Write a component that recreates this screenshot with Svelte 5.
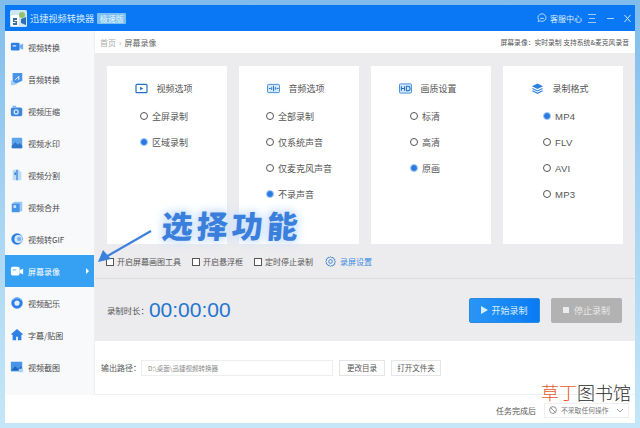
<script>
  const nav = [
    { label: '视频转换', icon: 'video' },
    { label: '音频转换', icon: 'audio' },
    { label: '视频压缩', icon: 'compress' },
    { label: '视频水印', icon: 'mark' },
    { label: '视频分割', icon: 'split' },
    { label: '视频合并', icon: 'merge' },
    { label: '视频转GIF', icon: 'gif' },
    { label: '屏幕录像', icon: 'record', active: true },
    { label: '视频配乐', icon: 'music' },
    { label: '字幕/贴图', icon: 'star' },
    { label: '视频截图', icon: 'shot' }
  ];
  const cards = [
    { cls: 'c1', title: '视频选项', icon: 'play', opts: ['全屏录制', '区域录制'], sel: 1 },
    { cls: 'c2', title: '音频选项', icon: 'wave', opts: ['全部录制', '仅系统声音', '仅麦克风声音', '不录声音'], sel: 3 },
    { cls: 'c3', title: '画质设置', icon: 'hd', opts: ['标清', '高清', '原画'], sel: 2 },
    { cls: 'c4', title: '录制格式', icon: 'layers', opts: ['MP4', 'FLV', 'AVI', 'MP3'], sel: 0 }
  ];
  const checks = ['开启屏幕画图工具', '开启悬浮框', '定时停止录制'];
</script>

<div class="page">
  <div class="window">
    <header class="titlebar">
      <svg class="logo" viewBox="0 0 17 17" width="17" height="17">
        <rect width="17" height="17" rx="1.500" fill="#cfe6f4" />
        <path d="M1 5h8v11H1z" fill="#fff" />
        <circle cx="12" cy="5" r="3" fill="#8fc36b" />
        <path d="M11 9l5-2v8l-5-2z" fill="#2f6fb4" />
        <path d="M3 8h4v2H4.500v1H7v4H3v-2h2.500v-1H3z" fill="#3c6f9c" />
      </svg>
      <span class="app-name">迅捷视频转换器</span>
      <span class="badge">极速版</span>
      <div class="spacer"></div>
      <svg class="chat" viewBox="0 0 12 12" width="10" height="10" fill="none" stroke="#bfe0ff" stroke-width="1.100">
        <path d="M6 1a4.800 4.500 0 1 1-2.600 8.300L1.500 10.500l.5-2.400A4.800 4.500 0 0 1 6 1z" />
        <path d="M3.800 6.500h4.400" />
      </svg>
      <span class="service">客服中心</span>
      <svg class="win-ico menu" viewBox="0 0 8 9" width="8" height="9" stroke="#a8d4ff" stroke-width=".9">
        <path d="M0 .5h8M1 4.500h6M0 8.500h8" />
      </svg>
      <svg class="win-ico min" viewBox="0 0 9 9" width="9" height="9" stroke="#a8d4ff" stroke-width="1">
        <path d="M1 4.500h7" />
      </svg>
      <svg class="win-ico" viewBox="0 0 9 9" width="9" height="9" stroke="#cfe7ff" stroke-width="1">
        <path d="M1.500 1l6 7M7.500 1l-6 7" />
      </svg>
    </header>

    <div class="body">
      <aside class="sidebar">
        {#each nav as item}
          <div class="nav-item" class:active={item.active}>
            <svg class="nav-ico" viewBox="0 0 16 16" width="14" height="14">
              {#if item.icon === 'video'}
                <rect x="1" y="3" width="10" height="9" rx="1.500" fill="#2f80e6" />
                <path d="M11 6l4-2v7l-4-2z" fill="#6fb0f2" />
                <rect x="3" y="6" width="4" height="1.500" fill="#cfe6ff" />
              {:else if item.icon === 'audio'}
                <path d="M3 1h11v9L3 15z" fill="#4a94e8" />
                <path d="M1 9l7 5-5 1H1z" fill="#a7cff5" />
                <path d="M6 9l4-4v4" stroke="#fff" fill="none" />
              {:else if item.icon === 'compress'}
                <rect x="1" y="4" width="13" height="10" rx="2" fill="#3d87dc" />
                <circle cx="7" cy="9" r="3" fill="#d6e9fb" />
                <circle cx="7" cy="9" r="1.500" fill="#3d87dc" />
                <rect x="3" y="2" width="4" height="2" fill="#7bb4ee" />
              {:else if item.icon === 'mark'}
                <rect x="2" y="2" width="12" height="12" rx="1.500" fill="#5ea4ea" />
                <path d="M2 11l4-4 3 3 2-2 3 3v3H2z" fill="#2f74c9" />
              {:else if item.icon === 'split'}
                <path d="M3 2h7l3 3v9H3z" fill="#bcdcf8" />
                <path d="M8 2v12" stroke="#3a86dd" stroke-width="1.500" />
                <rect x="5" y="5" width="2" height="3" fill="#3a86dd" />
              {:else if item.icon === 'merge'}
                <rect x="4" y="2" width="10" height="11" fill="#9cc9f4" />
                <rect x="2" y="4" width="9" height="10" fill="#4a94e8" />
                <rect x="4" y="6" width="3" height="3" fill="#cfe6ff" />
              {:else if item.icon === 'gif'}
                <circle cx="8" cy="8" r="6.500" fill="#2f80e6" />
                <circle cx="9.500" cy="8" r="4.500" fill="#d5e9fb" />
                <circle cx="10.500" cy="8" r="2.500" fill="#7bb4ee" />
              {:else if item.icon === 'record'}
                <rect x="1" y="3" width="10" height="10" rx="2" fill="#fff" />
                <path d="M11 7l4-2v7l-4-2z" fill="#fff" />
                <rect x="3" y="6" width="4" height="1.500" fill="#8cc6f6" />
              {:else if item.icon === 'music'}
                <circle cx="8" cy="8" r="6.500" fill="#2f80e6" />
                <circle cx="8" cy="8" r="3" fill="#e1effb" />
                <path d="M3 5a6 6 0 0 1 10 0" stroke="#8fc3f3" fill="none" />
              {:else if item.icon === 'star'}
                <path d="M8 1l7 6-2 1v6H9v-4H7v4H3V8L1 7z" fill="#2f80e6" />
              {:else}
                <rect x="1" y="2" width="13" height="11" fill="#4a94e8" />
                <path d="M2 11l4-4 3 3 4-3v5H2z" fill="#1f66c0" />
                <rect x="10" y="10" width="5" height="4" fill="#a9d2f6" />
              {/if}
            </svg>
            <span class="nav-label">{item.label}</span>
            {#if item.active}<span class="caret"></span>{/if}
          </div>
        {/each}
      </aside>

      <main class="main">
        <div class="crumbs">
          <span class="home">首页</span>
          <span class="sep">›</span>
          <span>屏幕录像</span>
          <div class="spacer"></div>
          <span class="hint">屏幕录像：实时录制 支持系统&amp;麦克风录音</span>
        </div>

        <section class="options">
          <div class="cards">
            {#each cards as card}
              <div class="card {card.cls}">
                <div class="card-title">
                  <svg viewBox="0 0 14 12" width="13" height="11">
                    {#if card.icon === 'play'}
                      <rect x="1" y="1.500" width="12" height="9" rx="1" fill="none" stroke="#1f70c4" stroke-width="1.300" />
                      <path d="M5.500 4l3.500 2-3.500 2z" fill="#1f70c4" />
                    {:else if card.icon === 'wave'}
                      <rect x="0.500" y="1.500" width="13" height="9" rx="1" fill="#d5e8fa" stroke="#3a8ad8" />
                      <path d="M2 6h2M5 4.500v3M7 3v6M9 4.500v3M10.500 6h2" stroke="#1f70c4" />
                    {:else if card.icon === 'hd'}
                      <rect x="0.500" y="1" width="13" height="10" rx="1" fill="#d5e8fa" stroke="#3a8ad8" />
                      <path d="M2.500 3.500v5M6 3.500v5M2.500 6H6" stroke="#1f70c4" stroke-width="1.100" fill="none" />
                      <path d="M8 3.500v5h1.500a2.500 2.500 0 0 0 0-5z" stroke="#1f70c4" stroke-width="1.100" fill="none" />
                    {:else}
                      <path d="M7 0.500l6 3-6 3-6-3z" fill="#2f80dc" />
                      <path d="M1.500 6l5.500 2.700L12.500 6" stroke="#2f80dc" stroke-width="1.200" fill="none" />
                      <path d="M1.500 8.500l5.500 2.700 5.500-2.700" stroke="#2f80dc" stroke-width="1.200" fill="none" />
                    {/if}
                  </svg>
                  <span>{card.title}</span>
                </div>
                <div class="radios">
                  {#each card.opts as opt, i}
                    <div class="radio-row">
                      <span class="radio" class:on={i === card.sel}></span>
                      <span class="radio-text" class:latin={card.icon === 'layers'}>{opt}</span>
                    </div>
                  {/each}
                </div>
              </div>
            {/each}
          </div>

          <div class="checks">
            {#each checks as c}
              <label class="check"><span class="box"></span>{c}</label>
            {/each}
            <svg class="gear" viewBox="0 0 12 12" width="11" height="11" fill="none" stroke="#3a7fc8" stroke-width="1">
              <path d="M6 .8l1.200 1.100 1.600-.3.500 1.500 1.500.6-.3 1.500.9 1.100-1 1.200.3 1.500-1.500.5-.6 1.400-1.500-.3L6 11.200l-1.100-1-1.600.3-.5-1.500-1.400-.5.300-1.600L.8 6l.9-1.100-.3-1.600 1.400-.5.600-1.400 1.500.3z" />
              <circle cx="6" cy="6" r="2" />
            </svg>
            <span class="settings">录屏设置</span>
          </div>
        </section>

        <section class="timer">
          <span class="timer-label">录制时长：</span>
          <span class="time">00:00:00</span>
          <div class="spacer"></div>
          <button class="btn start"><span class="tri"></span>开始录制</button>
          <button class="btn stop"><span class="sq"></span>停止录制</button>
        </section>

        <section class="output">
          <span class="out-label">输出路径：</span>
          <div class="path">D:\桌面\迅捷视频转换器</div>
          <button class="ghost dir">更改目录</button>
          <button class="ghost folder">打开文件夹</button>
        </section>
      </main>
    </div>

    <footer class="footer">
      <span class="done">任务完成后</span>
      <div class="select">
        <svg viewBox="0 0 8 8" width="8" height="8" fill="none" stroke="#777" stroke-width=".8">
          <circle cx="4" cy="4" r="3.400" /><path d="M1.700 1.700l4.600 4.600" />
        </svg>
        <span>不采取任何操作</span>
        <svg class="chev" viewBox="0 0 8 5" width="8" height="5" fill="none" stroke="#888" stroke-width=".8"><path d="M1 1l3 3 3-3" /></svg>
      </div>
    </footer>
  </div>

  <div class="callout">选择功能</div>
  <svg class="arrow" viewBox="0 0 60 36" width="60" height="36">
    <path d="M53 2L6 29" stroke="#3d7fdc" stroke-width="2.200" />
    <path d="M0 33l5-12 8 9z" fill="#3d7fdc" />
  </svg>
  <div class="watermark"><span class="orange">草丁</span>图书馆</div>
</div>

<style>
  :global(body) {
    margin: 0;
    font-family: "Noto Sans CJK SC", "Liberation Sans", sans-serif;
  }
  .page {
    position: relative;
    width: 640px;
    height: 428px;
    box-sizing: border-box;
    padding: 5px;
    overflow: hidden;
    background: linear-gradient(180deg, #7fbcec 0%, #a9d4f2 50%, #c5e6f8 100%);
  }
  .window {
    display: flex;
    flex-direction: column;
    height: 418px;
    background: #fff;
  }
  .spacer { flex: 1; }
  .titlebar {
    display: flex;
    align-items: center;
    height: 26px;
    flex: none;
    background: #0a78f5;
    color: #fff;
    padding-left: 5px;
    padding-right: 3px;
  }
  .logo { margin-right: 3px; }
  .app-name { font-size: 9.200px; color: #d8ebff; }
  .badge {
    margin-left: 3px;
    font-size: 8px;
    line-height: 11px;
    padding: 0 2.500px;
    background: #7ac0f0;
    color: #e8f6ff;
    border-radius: 1px;
  }
  .chat { margin-right: 3px; }
  .service { font-size: 8px; color: #dcedff; margin-right: 6px; }
  .win-ico.min { margin-left: 10px; }
  .win-ico:last-child { margin-left: 8px; }
  .body { display: flex; height: 364px; flex: none; }
  .sidebar {
    width: 89px;
    flex: none;
    background: #f8f9fb;
    border-right: 1px solid #efeff1;
  }
  .nav-item {
    display: flex;
    align-items: center;
    height: 32px;
    padding-left: 5px;
    color: #4a4a4a;
    font-size: 8px;
  }
  .nav-ico { flex: none; margin-right: 4px; }
  .nav-item.active { background: #36a1f3; color: #fff; }
  .caret {
    margin-left: 26px;
    width: 0;
    height: 0;
    border-left: 3.500px solid #fff;
    border-top: 3px solid transparent;
    border-bottom: 3px solid transparent;
  }
  .main { flex: 1; min-width: 0; display: flex; flex-direction: column; }
  .crumbs {
    display: flex;
    align-items: center;
    gap: 3px;
    height: 22px;
    flex: none;
    padding: 0 6px 0 5px;
    font-size: 8px;
    color: #666;
    background: #fff;
  }
  .home { color: #aaa; }
  .sep { color: #aaa; }
  .hint { font-size: 6.800px; color: #555; }
  .options {
    height: 226px;
    flex: none;
    box-sizing: border-box;
    background: #ecebee;
    padding: 13px 11px 0 12px;
    border-bottom: 1px solid #dcdcdf;
  }
  .cards { display: grid; grid-template-columns: repeat(4, 120px); gap: 12px; }
  .card { background: #fff; height: 178px; }
  .card-title {
    display: flex;
    align-items: center;
    justify-content: center;
    gap: 8px;
    height: 14px;
    padding: 15px 6px 8px 0;
    font-size: 9px;
    color: #555;
  }
  .radios { display: flex; flex-direction: column; }
  .radio-row { display: flex; align-items: center; height: 26px; gap: 4px; font-size: 9px; color: #555; }
  .latin { font-family: "Liberation Sans", sans-serif; font-size: 9.500px; letter-spacing: .3px; }
  .c1 .radios { padding-left: 33px; }
  .c2 .radios { padding-left: 27px; }
  .c3 .radios { padding-left: 39px; }
  .c4 .radios { padding-left: 40px; }
  .radio {
    width: 8px;
    height: 8px;
    box-sizing: border-box;
    border: 1px solid #555;
    border-radius: 50%;
    background: #fff;
  }
  .radio.on { background: #2a7ae0; border: 1px solid #a8ccf5; }
  .checks {
    display: flex;
    align-items: center;
    height: 34px;
    margin-left: -1px;
    padding-top: 1px;
    box-sizing: border-box;
    font-size: 8px;
    color: #555;
  }
  .check { display: flex; align-items: center; gap: 3px; margin-right: 11px; }
  .box { width: 8px; height: 8px; box-sizing: border-box; border: 1px solid #555; background: #fff; }
  .gear { margin-left: 1px; margin-right: 4px; }
  .settings { color: #3d8be0; }
  .timer {
    height: 62px;
    flex: none;
    box-sizing: border-box;
    display: flex;
    align-items: center;
    padding: 0 13px 0 12px;
    background: #ecebee;
  }
  .timer-label { font-size: 8.400px; color: #555; }
  .time { font-family: "Liberation Sans", sans-serif; font-size: 21px; color: #2576cf; }
  .btn {
    display: flex;
    align-items: center;
    justify-content: center;
    gap: 3px;
    width: 71px;
    height: 25px;
    margin: 0 0 0 11px;
    padding: 0;
    border-radius: 2px;
    border: none;
    color: #fff;
    font: inherit;
    font-size: 9px;
  }
  .start { background: linear-gradient(90deg, #2996f5, #0a7af5); border: 1px solid #2a8ae0; box-sizing: border-box; color: #d9eeff; }
  .stop { background: #b2b2b2; color: #e8e8e8; }
  .tri { border-left: 7px solid #d8eeff; border-top: 4px solid transparent; border-bottom: 4px solid transparent; }
  .sq { width: 6px; height: 6px; background: #ececec; margin-right: 2px; }
  .output {
    flex: 1;
    display: flex;
    align-items: center;
    padding: 0 0 0 6px;
    background: #fff;
    border-bottom: 1px solid #f0f0f0;
    font-size: 8px;
    color: #555;
  }
  .out-label { width: 40px; flex: none; white-space: nowrap; }
  .path {
    width: 192px;
    height: 16px;
    box-sizing: border-box;
    line-height: 14px;
    border: 1px solid #eee;
    padding-left: 6px;
    font-size: 6.500px;
    color: #888;
    margin-right: 6px;
  }
  .ghost {
    height: 16px;
    padding: 0;
    margin-right: 6px;
    background: #fff;
    border: 1px solid #e5e5e5;
    font: inherit;
    font-size: 7.500px;
    color: #555;
    line-height: 14px;
  }
  .dir { width: 46px; }
  .folder { width: 50px; }
  .footer {
    flex: 1;
    display: flex;
    align-items: center;
    justify-content: flex-end;
    padding: 2px 6px 0 0;
    background: #fff;
    font-size: 8px;
    color: #555;
  }
  .done { margin-right: 8px; }
  .select {
    display: flex;
    align-items: center;
    gap: 4px;
    width: 85px;
    height: 15px;
    box-sizing: border-box;
    padding: 0 4px;
    border: 1px solid #eee;
    font-size: 6.800px;
    color: #777;
    white-space: nowrap;
  }
  .chev { margin-left: auto; flex: none; }
  .callout {
    position: absolute;
    left: 162px;
    top: 205px;
    font-size: 31px;
    line-height: 40px;
    font-weight: 900;
    letter-spacing: 4px;
    white-space: nowrap;
    color: #3b7fdd;
    transform: skewX(-4deg);
    text-shadow: 0 0 6px #cfe3fb, 0 0 10px #cfe3fb, 0 0 14px #cfe3fb;
  }
  .arrow { position: absolute; left: 98px; top: 229px; }
  .watermark {
    position: absolute;
    left: 541px;
    top: 379px;
    font-size: 18px;
    line-height: 26px;
    white-space: nowrap;
    color: #2a2a2a;
    font-weight: 300;
  }
  .orange { color: #e8591e; }
</style>
